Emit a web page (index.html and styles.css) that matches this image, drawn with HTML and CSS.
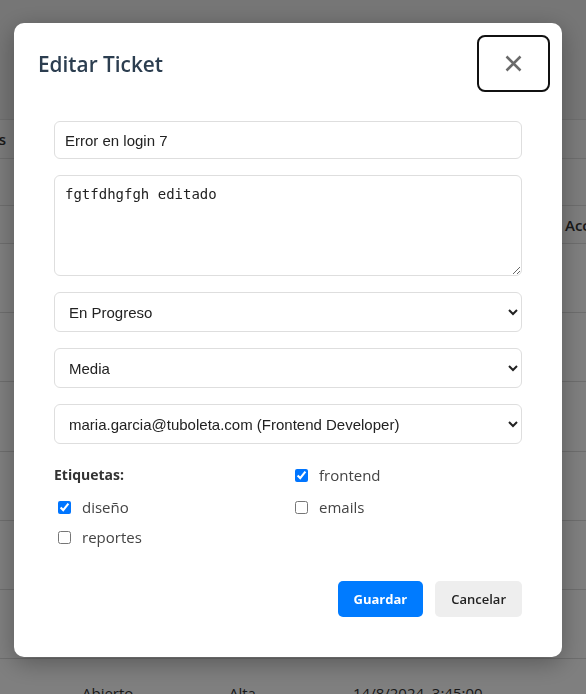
FILE: index.html
```html
<!DOCTYPE html>
<html lang="es">
<head>
<meta charset="utf-8">
<title>Editar Ticket</title>
<link rel="stylesheet" href="styles.css">
</head>
<body>
<div class="page">
  <div class="topbar"></div>
  <div class="row row-filter"><div class="cut"><span>Etiquetas</span></div></div>
  <div class="row row-blank"></div>
  <div class="row row-head">
    <span class="c c1"></span><span class="c c2"></span><span class="c c3"></span><span class="c c5">Acciones</span>
  </div>
  <div class="row tall"></div>
  <div class="row tall"></div>
  <div class="row tall"></div>
  <div class="row tall"></div>
  <div class="row tall"></div>
  <div class="row tall"></div>
  <div class="row tall">
    <span class="c c1">Abierto</span><span class="c c2">Alta</span><span class="c c3">14/8/2024, 3:45:00</span><span class="c c5"></span>
  </div>
</div>

<div class="overlay">
  <div class="modal">
    <div class="modal-header">
      <h2 class="modal-title">Editar Ticket</h2>
      <button class="close-btn" type="button" aria-label="Cerrar">
        <svg width="17" height="17" viewBox="0 0 17 17"><path d="M1.5 1.5 L15.5 15.5 M15.5 1.5 L1.5 15.5" stroke="#6a6a6a" stroke-width="2.5" fill="none"/></svg>
      </button>
    </div>
    <form class="modal-body">
      <input class="field" type="text" value="Error en login 7">
      <textarea class="field area">fgtfdhgfgh editado</textarea>
      <select class="field sel"><option>En Progreso</option></select>
      <select class="field sel"><option>Media</option></select>
      <select class="field sel"><option>maria.garcia@tuboleta.com (Frontend Developer)</option></select>
      <div class="tags">
        <span class="tags-label">Etiquetas:</span>
        <label class="tag"><input type="checkbox" checked> frontend</label>
        <label class="tag"><input type="checkbox" checked> diseño</label>
        <label class="tag"><input type="checkbox"> emails</label>
        <label class="tag"><input type="checkbox"> reportes</label>
      </div>
      <div class="actions">
        <button type="button" class="btn btn-primary">Guardar</button>
        <button type="button" class="btn btn-secondary">Cancelar</button>
      </div>
    </form>
  </div>
</div>
</body>
</html>
```

FILE: styles.css
```css
* { box-sizing: border-box; }

html, body {
  margin: 0;
  padding: 0;
}

body {
  background: #f2f2f2;
  font-family: "Open Sans", "Noto Sans", sans-serif;
  color: #333;
  overflow: hidden;
  height: 694px;
}

.page {
  display: flex;
  flex-direction: column;
  height: 694px;
  overflow: hidden;
}

.topbar {
  height: 119px;
  flex-shrink: 0;
  background: #ececec;
}

.row {
  display: flex;
  align-items: center;
  background: #fff;
  border-top: 1px solid #dcdcdc;
  font-size: 15px;
  color: #333;
  flex-shrink: 0;
}

.row-filter { height: 39px; background: #f6f6f6; }
.row-blank { height: 47px; background: #f9f9f9; }
.row-head { height: 38px; background: #fafafa; font-weight: 600; }
.tall { height: 69.2px; }

.cut {
  width: 6px;
  display: flex;
  justify-content: flex-end;
  overflow: hidden;
  white-space: nowrap;
  font-weight: 600;
}

.c { display: block; white-space: nowrap; flex-shrink: 0; }
.c1 { margin-left: 82px; width: 147px; }
.c2 { width: 124px; }
.c3 { width: 212px; }
.c5 { width: 60px; }

.overlay {
  position: fixed;
  inset: 0;
  background: rgba(0, 0, 0, 0.5);
  display: flex;
  justify-content: center;
  align-items: flex-start;
  padding: 23px 10px 0 0;
}

.modal {
  width: 548px;
  background: #fff;
  border-radius: 10px;
  box-shadow: 0 6px 24px rgba(0, 0, 0, 0.3);
}

.modal-header {
  display: flex;
  align-items: center;
  justify-content: space-between;
  padding: 12px 12px 12px 24px;
}

.modal-title {
  margin: 0;
  font-size: 20.8px;
  font-weight: 600;
  color: #2c3e50;
}

.close-btn {
  width: 73px;
  height: 57px;
  border: 2px solid #111;
  border-radius: 8px;
  background: #fff;
  display: flex;
  align-items: center;
  justify-content: center;
  padding: 0;
}

.modal-body {
  display: flex;
  flex-direction: column;
  gap: 16px;
  padding: 17px 40px 40px;
  margin: 0;
}

.field {
  width: 100%;
  border: 1px solid #dedede;
  border-radius: 6px;
  font-family: "Liberation Sans", Arial, sans-serif;
  font-size: 15px;
  color: #222;
  background: #fff;
  margin: 0;
}

input.field {
  height: 38px;
  padding: 0 10px;
}

.area {
  height: 101px;
  padding: 10px;
  font-family: "DejaVu Sans Mono", monospace;
  font-size: 14px;
  resize: vertical;
  display: block;
}

.sel {
  height: 40px;
  padding: 0 10px;
}

.tags {
  display: grid;
  grid-template-columns: 1fr 1fr;
  column-gap: 6px;
  row-gap: 8px;
  margin-top: 4px;
  align-items: start;
}

.tags-label {
  font-size: 14px;
  font-weight: 700;
  color: #333;
  line-height: 22px;
  padding-bottom: 2px;
}

.tag {
  display: flex;
  align-items: center;
  gap: 8px;
  font-size: 15px;
  color: #444;
  line-height: 22px;
}

.tag input {
  margin: 3px 3px 3px 4px;
  width: 13px;
  height: 13px;
}

.actions {
  display: flex;
  justify-content: flex-end;
  gap: 12px;
  margin-top: 17px;
}

.btn {
  height: 36px;
  padding: 0 16px;
  border: none;
  border-radius: 5px;
  font-family: "Open Sans", "Noto Sans", sans-serif;
  font-size: 13px;
  font-weight: 700;
}

.btn-primary {
  background: #007bff;
  color: #fff;
}

.btn-secondary {
  background: #eeeeee;
  color: #222;
  font-weight: 600;
}
```
